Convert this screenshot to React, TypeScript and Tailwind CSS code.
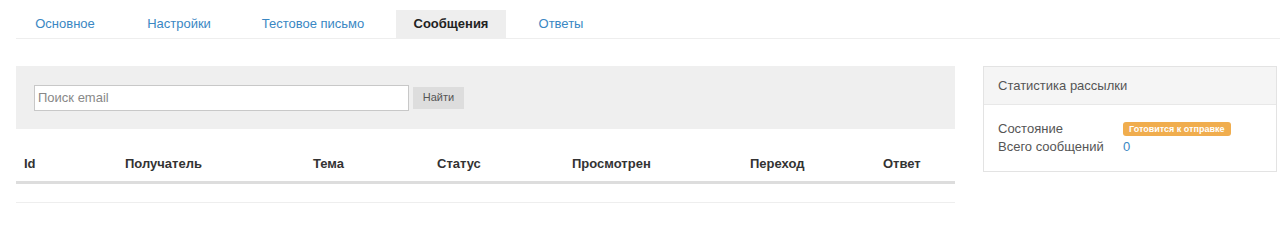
import React from "react";

const TABS = [
  { title: "Основное", width: "w-[98px]" },
  { title: "Настройки", width: "w-[102px]" },
  { title: "Тестовое письмо", width: "w-[138px]" },
  { title: "Сообщения", width: "w-[110px]" },
  { title: "Ответы", width: "w-[82px]" },
];
const ACTIVE_TAB = "Сообщения";

const COLUMNS = [
  { title: "Id", width: "w-[101px]" },
  { title: "Получатель", width: "w-[188px]" },
  { title: "Тема", width: "w-[124px]" },
  { title: "Статус", width: "w-[135px]" },
  { title: "Просмотрен", width: "w-[178px]" },
  { title: "Переход", width: "w-[133px]" },
  { title: "Ответ", width: "w-[80px]" },
];

export default function App() {
  return (
    <div
      className="w-[1280px] h-[252px] bg-white text-[13px] text-[#333]"
      style={{ fontFamily: '"Liberation Sans", Arial, sans-serif' }}
    >
      <div className="pt-[10px] pl-4">
        <ul className="flex gap-[14px] border-b border-[#eeeeee]">
          {TABS.map((tab) => {
            const isActive = tab.title === ACTIVE_TAB;
            return (
              <li key={tab.title}>
                <a
                  href="#"
                  className={`block ${tab.width} h-[28px] leading-[28px] text-center whitespace-nowrap ${
                    isActive ? "bg-[#eeeeee] font-bold text-[#222]" : "text-[#3a87c3]"
                  }`}
                >
                  {tab.title}
                </a>
              </li>
            );
          })}
        </ul>
      </div>

      <div className="flex gap-[28px] pl-4 pt-[27px]">
        <div className="w-[939px]">
          <div className="bg-[#efefef] h-[63px] pl-[18px] flex items-center gap-1">
            <input
              type="text"
              placeholder="Поиск email"
              className="w-[375px] h-[26px] border border-[#c8c8c8] bg-white px-[3px] text-[13px] placeholder:text-[#888] outline-none"
            />
            <button className="h-[22px] w-[51px] bg-[#dddddd] text-[11px] text-[#555]">Найти</button>
          </div>

          <table className="w-full mt-[19px] border-collapse">
            <thead>
              <tr className="border-b-[3px] border-[#dddddd]">
                {COLUMNS.map((col) => (
                  <th key={col.title} className={`${col.width} text-left font-bold px-2 h-[34px] pb-[2px]`}>
                    {col.title}
                  </th>
                ))}
              </tr>
            </thead>
            <tbody>
              <tr className="border-b border-[#eeeeee]">
                <td colSpan={COLUMNS.length} className="h-[20px]" />
              </tr>
            </tbody>
          </table>
        </div>

        <div className="w-[294px] h-[106px] border border-[#e3e3e3] self-start">
          <div className="h-[38px] bg-[#f5f5f5] border-b border-[#e8e8e8] px-[14px] flex items-center text-[#555]">
            Статистика рассылки
          </div>
          <div className="px-[14px] pt-[15px] text-[#555] leading-[18px]">
            <div className="flex items-center">
              <span className="w-[125px]">Состояние</span>
              <span className="bg-[#f0ad4e] text-white text-[9px] font-bold rounded-[3px] px-[6px] h-[14px] leading-[14px]">
                Готовится к отправке
              </span>
            </div>
            <div className="flex items-center">
              <span className="w-[125px]">Всего сообщений</span>
              <a href="#" className="text-[#3a87c3]">0</a>
            </div>
          </div>
        </div>
      </div>
    </div>
  );
}
